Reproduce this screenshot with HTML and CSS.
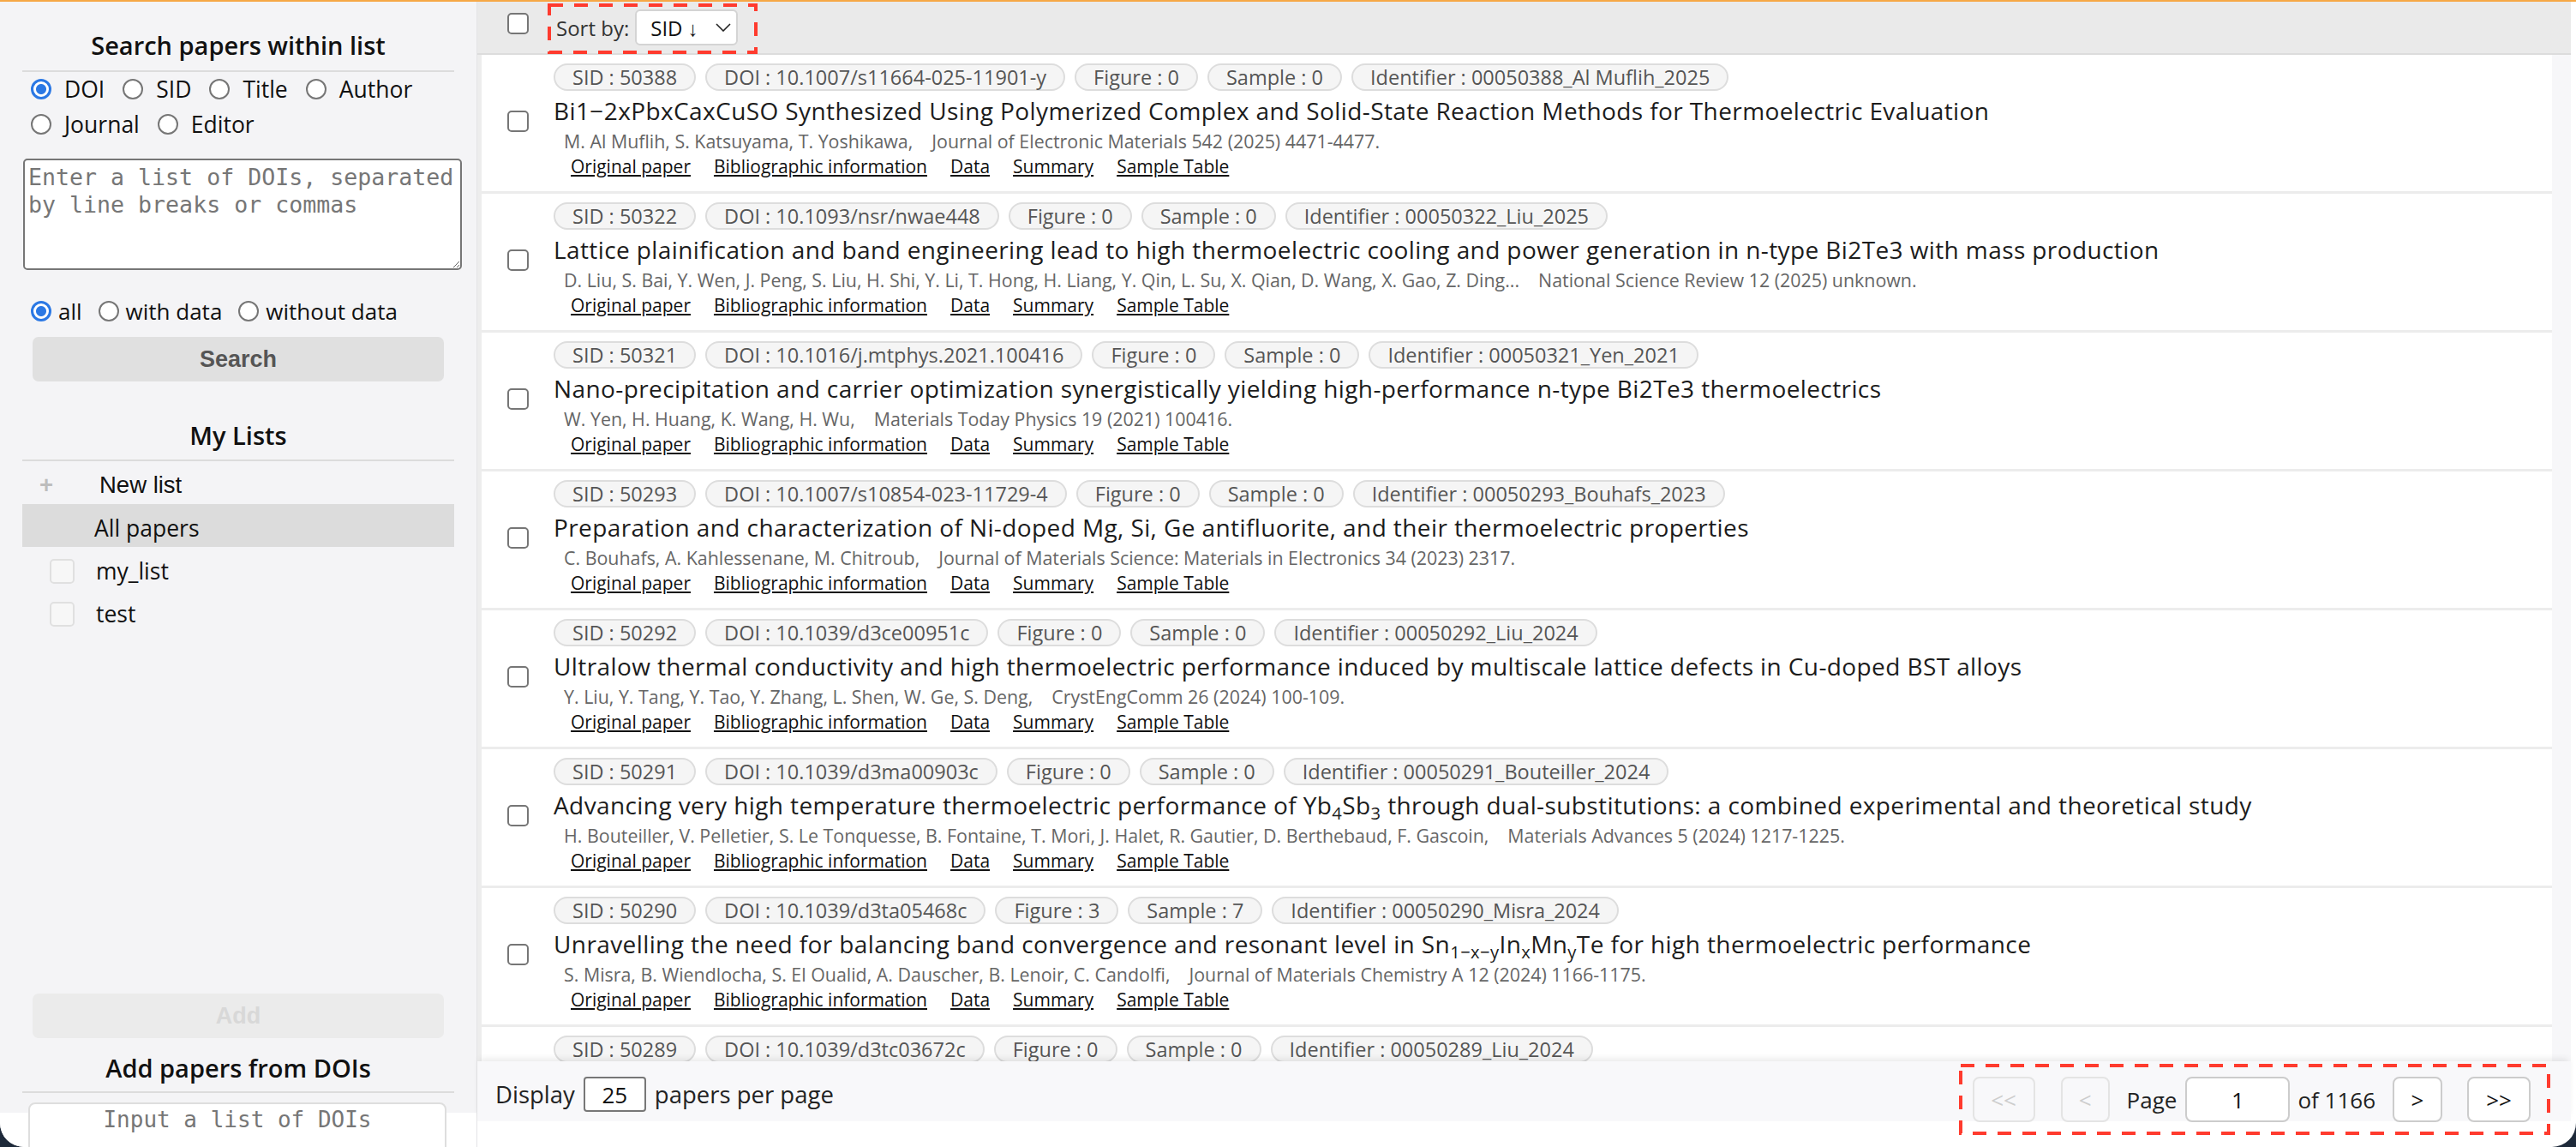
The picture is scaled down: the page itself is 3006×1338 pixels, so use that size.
FILE: index.html
```html
<!DOCTYPE html>
<html lang="en">
<head>
<meta charset="utf-8">
<title>Paper list</title>
<link rel="stylesheet" href="styles.css">
</head>
<body>
<div class="window">
  <aside class="sidebar">
    <h2 class="side-title">Search papers within list</h2>
    <div class="radios">
      <label class="radio"><input type="radio" name="field" checked>DOI</label>
      <label class="radio"><input type="radio" name="field">SID</label>
      <label class="radio"><input type="radio" name="field">Title</label>
      <label class="radio"><input type="radio" name="field">Author</label>
      <label class="radio"><input type="radio" name="field">Journal</label>
      <label class="radio"><input type="radio" name="field">Editor</label>
    </div>
    <textarea class="doi-area" placeholder="Enter a list of DOIs, separated by line breaks or commas"></textarea>
    <div class="radios filter">
      <label class="radio"><input type="radio" name="data" checked>all</label>
      <label class="radio"><input type="radio" name="data">with data</label>
      <label class="radio"><input type="radio" name="data">without data</label>
    </div>
    <button class="btn">Search</button>

    <h2 class="side-title lists-title">My Lists</h2>
    <ul class="lists">
      <li class="new"><span class="plus">+</span><span>New list</span></li>
      <li class="active">All papers</li>
      <li class="item"><span class="lbox"></span>my_list</li>
      <li class="item"><span class="lbox"></span>test</li>
    </ul>

    <div class="side-bottom">
      <button class="btn add">Add</button>
      <h2 class="side-title">Add papers from DOIs</h2>
      <textarea class="doi-input" placeholder="Input a list of DOIs"></textarea>
    </div>
  </aside>

  <main class="main">
    <div class="toolbar">
      <input type="checkbox" class="cb head-cb">
      <div class="sort">
        <span>Sort by:</span>
        <div class="select"><span>SID ↓</span><svg width="18" height="10" viewBox="0 0 18 10"><path d="M1 1 L9 9 L17 1" fill="none" stroke="#222" stroke-width="1.6"/></svg></div>
        <svg class="mark" width="245" height="59" viewBox="0 0 245 59"><rect x="2" y="2" width="241" height="55" fill="none" stroke="#ff3b2e" stroke-width="4" stroke-dasharray="16 13"/></svg>
      </div>
    </div>

    <div class="list">
      <div class="rows">
        <div class="row">
          <input type="checkbox" class="cb">
          <div class="paper">
            <div class="chips"><span class="chip">SID : 50388</span><span class="chip">DOI : 10.1007/s11664-025-11901-y</span><span class="chip">Figure : 0</span><span class="chip">Sample : 0</span><span class="chip">Identifier : 00050388_Al Muflih_2025</span></div>
            <div class="title">Bi1−2xPbxCaxCuSO Synthesized Using Polymerized Complex and Solid-State Reaction Methods for Thermoelectric Evaluation</div>
            <div class="meta">M. Al Muflih, S. Katsuyama, T. Yoshikawa,<span class="journal">Journal of Electronic Materials 542 (2025) 4471-4477.</span></div>
            <div class="links"><a href="#">Original paper</a><a href="#">Bibliographic information</a><a href="#">Data</a><a href="#">Summary</a><a href="#">Sample Table</a></div>
          </div>
        </div>
        <div class="row">
          <input type="checkbox" class="cb">
          <div class="paper">
            <div class="chips"><span class="chip">SID : 50322</span><span class="chip">DOI : 10.1093/nsr/nwae448</span><span class="chip">Figure : 0</span><span class="chip">Sample : 0</span><span class="chip">Identifier : 00050322_Liu_2025</span></div>
            <div class="title">Lattice plainification and band engineering lead to high thermoelectric cooling and power generation in n-type Bi2Te3 with mass production</div>
            <div class="meta">D. Liu, S. Bai, Y. Wen, J. Peng, S. Liu, H. Shi, Y. Li, T. Hong, H. Liang, Y. Qin, L. Su, X. Qian, D. Wang, X. Gao, Z. Ding...<span class="journal">National Science Review 12 (2025) unknown.</span></div>
            <div class="links"><a href="#">Original paper</a><a href="#">Bibliographic information</a><a href="#">Data</a><a href="#">Summary</a><a href="#">Sample Table</a></div>
          </div>
        </div>
        <div class="row">
          <input type="checkbox" class="cb">
          <div class="paper">
            <div class="chips"><span class="chip">SID : 50321</span><span class="chip">DOI : 10.1016/j.mtphys.2021.100416</span><span class="chip">Figure : 0</span><span class="chip">Sample : 0</span><span class="chip">Identifier : 00050321_Yen_2021</span></div>
            <div class="title">Nano-precipitation and carrier optimization synergistically yielding high-performance n-type Bi2Te3 thermoelectrics</div>
            <div class="meta">W. Yen, H. Huang, K. Wang, H. Wu,<span class="journal">Materials Today Physics 19 (2021) 100416.</span></div>
            <div class="links"><a href="#">Original paper</a><a href="#">Bibliographic information</a><a href="#">Data</a><a href="#">Summary</a><a href="#">Sample Table</a></div>
          </div>
        </div>
        <div class="row">
          <input type="checkbox" class="cb">
          <div class="paper">
            <div class="chips"><span class="chip">SID : 50293</span><span class="chip">DOI : 10.1007/s10854-023-11729-4</span><span class="chip">Figure : 0</span><span class="chip">Sample : 0</span><span class="chip">Identifier : 00050293_Bouhafs_2023</span></div>
            <div class="title">Preparation and characterization of Ni-doped Mg, Si, Ge antifluorite, and their thermoelectric properties</div>
            <div class="meta">C. Bouhafs, A. Kahlessenane, M. Chitroub,<span class="journal">Journal of Materials Science: Materials in Electronics 34 (2023) 2317.</span></div>
            <div class="links"><a href="#">Original paper</a><a href="#">Bibliographic information</a><a href="#">Data</a><a href="#">Summary</a><a href="#">Sample Table</a></div>
          </div>
        </div>
        <div class="row">
          <input type="checkbox" class="cb">
          <div class="paper">
            <div class="chips"><span class="chip">SID : 50292</span><span class="chip">DOI : 10.1039/d3ce00951c</span><span class="chip">Figure : 0</span><span class="chip">Sample : 0</span><span class="chip">Identifier : 00050292_Liu_2024</span></div>
            <div class="title">Ultralow thermal conductivity and high thermoelectric performance induced by multiscale lattice defects in Cu-doped BST alloys</div>
            <div class="meta">Y. Liu, Y. Tang, Y. Tao, Y. Zhang, L. Shen, W. Ge, S. Deng,<span class="journal">CrystEngComm 26 (2024) 100-109.</span></div>
            <div class="links"><a href="#">Original paper</a><a href="#">Bibliographic information</a><a href="#">Data</a><a href="#">Summary</a><a href="#">Sample Table</a></div>
          </div>
        </div>
        <div class="row">
          <input type="checkbox" class="cb">
          <div class="paper">
            <div class="chips"><span class="chip">SID : 50291</span><span class="chip">DOI : 10.1039/d3ma00903c</span><span class="chip">Figure : 0</span><span class="chip">Sample : 0</span><span class="chip">Identifier : 00050291_Bouteiller_2024</span></div>
            <div class="title">Advancing very high temperature thermoelectric performance of Yb<sub>4</sub>Sb<sub>3</sub> through dual-substitutions: a combined experimental and theoretical study</div>
            <div class="meta">H. Bouteiller, V. Pelletier, S. Le Tonquesse, B. Fontaine, T. Mori, J. Halet, R. Gautier, D. Berthebaud, F. Gascoin,<span class="journal">Materials Advances 5 (2024) 1217-1225.</span></div>
            <div class="links"><a href="#">Original paper</a><a href="#">Bibliographic information</a><a href="#">Data</a><a href="#">Summary</a><a href="#">Sample Table</a></div>
          </div>
        </div>
        <div class="row">
          <input type="checkbox" class="cb">
          <div class="paper">
            <div class="chips"><span class="chip">SID : 50290</span><span class="chip">DOI : 10.1039/d3ta05468c</span><span class="chip">Figure : 3</span><span class="chip">Sample : 7</span><span class="chip">Identifier : 00050290_Misra_2024</span></div>
            <div class="title">Unravelling the need for balancing band convergence and resonant level in Sn<sub>1−x−y</sub>In<sub>x</sub>Mn<sub>y</sub>Te for high thermoelectric performance</div>
            <div class="meta">S. Misra, B. Wiendlocha, S. El Oualid, A. Dauscher, B. Lenoir, C. Candolfi,<span class="journal">Journal of Materials Chemistry A 12 (2024) 1166-1175.</span></div>
            <div class="links"><a href="#">Original paper</a><a href="#">Bibliographic information</a><a href="#">Data</a><a href="#">Summary</a><a href="#">Sample Table</a></div>
          </div>
        </div>
        <div class="row last-row">
          <div class="paper">
            <div class="chips"><span class="chip">SID : 50289</span><span class="chip">DOI : 10.1039/d3tc03672c</span><span class="chip">Figure : 0</span><span class="chip">Sample : 0</span><span class="chip">Identifier : 00050289_Liu_2024</span></div>
          </div>
        </div>
      </div>
      <div class="gutter"></div>
    </div>

    <div class="footer">
      <div class="perpage">
        <span>Display</span>
        <span class="num">25</span>
        <span>papers per page</span>
      </div>
      <div class="pager">
        <span class="pbtn dis first">&lt;&lt;</span>
        <span class="pbtn dis prev">&lt;</span>
        <span class="plabel">Page</span>
        <span class="pinput">1</span>
        <span class="pof">of 1166</span>
        <span class="pbtn next">&gt;</span>
        <span class="pbtn last">&gt;&gt;</span>
        <svg class="mark" width="690" height="83" viewBox="0 0 690 83"><rect x="2" y="2" width="686" height="79" fill="none" stroke="#ff3b2e" stroke-width="4" stroke-dasharray="16 13"/></svg>
      </div>
    </div>
  </main>
</div>
</body>
</html>
```

FILE: styles.css
```css
* { box-sizing: border-box; }

html, body {
  margin: 0;
  height: 1338px;
  overflow: hidden;
  background: #1e2a3a;
}

body {
  font-family: "Open Sans", "Noto Sans", sans-serif;
  color: #1c1c1c;
}

.window {
  height: 1338px;
  background: #ffffff;
  border-top: 2px solid #f6a846;
  border-radius: 0 0 28px 28px;
  overflow: hidden;
  display: flex;
  padding-right: 6px;
}

/* ---------- sidebar ---------- */
.sidebar {
  width: 557px;
  flex: none;
  border-right: 1px solid #e4e4e6;
  background: linear-gradient(#f4f4f6 0, #f4f4f6 1296px, #ffffff 1296px);
  padding: 0 26px;
  display: flex;
  flex-direction: column;
}

.side-title {
  margin: 31px 0 0;
  font-size: 29px;
  font-weight: 600;
  line-height: 40px;
  text-align: center;
  padding-bottom: 9px;
  border-bottom: 2px solid #dcdcdc;
  color: #111;
}

.radios {
  display: flex;
  flex-wrap: wrap;
  margin-top: -1px;
  font-size: 26.5px;
  color: #111;
}

.radio {
  display: inline-flex;
  align-items: center;
  height: 41px;
  margin-right: 11px;
}

.radio input {
  appearance: none;
  -webkit-appearance: none;
  width: 24px;
  height: 24px;
  margin: 0 15px 0 10px;
  border: 2px solid #767676;
  border-radius: 50%;
  background: #fff;
  flex: none;
}

.radio input:checked {
  border: 3px solid #2b78e4;
  background: radial-gradient(circle, #2b78e4 0, #2b78e4 5.5px, #ffffff 6.5px);
}

.filter { margin-top: 27px; font-size: 26px; }
.filter .radio { margin-right: 9px; }
.filter .radio input { margin-right: 8px; }

.doi-area {
  display: block;
  width: 512px;
  height: 130px;
  margin: 20px 0 0 1px;
  border: 2px solid #767676;
  border-radius: 5px;
  padding: 4px;
  font: 26.6px/32px "DejaVu Sans Mono", monospace;
  background: #fff;
  resize: vertical;
}

.doi-area::placeholder { color: #767676; }

.btn {
  display: block;
  margin: 10px 12px 0;
  height: 52px;
  border: none;
  border-radius: 7px;
  background: #e0e0e0;
  color: #555;
  font: 700 27px "Liberation Sans", Arial, sans-serif;
}

.lists-title {
  margin-top: 43px;
  padding-bottom: 8px;
}

.lists {
  list-style: none;
  margin: 0;
  padding: 0;
  font-size: 26.5px;
  color: #111;
}

.lists li {
  height: 50px;
  display: flex;
  align-items: center;
  padding-top: 6px;
}

.lists .new {
  padding-left: 20px;
  font-family: "Liberation Sans", Arial, sans-serif;
  font-size: 27.5px;
}

.plus {
  width: 70px;
  color: #bdbdbd;
  font-weight: 700;
}

.lists .active {
  background: #dcdcdc;
  padding-left: 84px;
}

.lists .item { padding-left: 32px; }

.lbox {
  width: 29px;
  height: 29px;
  border: 2px solid #e0e0e0;
  border-radius: 5px;
  background: #f7f7f7;
  margin-right: 25px;
  flex: none;
}

.side-bottom {
  margin-top: auto;
  display: flex;
  flex-direction: column;
}

.btn.add {
  margin: 0 12px;
  background: #ebebeb;
  color: #d8d8d8;
}

.side-bottom .side-title {
  margin-top: 15px;
  padding-bottom: 7px;
}

.doi-input {
  display: block;
  margin: 11px 9px -10px 7px;
  height: 62px;
  border: 2px solid #dedede;
  border-radius: 8px;
  background: #fff;
  font: 26px/32px "DejaVu Sans Mono", monospace;
  text-align: center;
  padding: 2px 4px 0;
  resize: none;
}

.doi-input::placeholder { color: #767676; }

/* ---------- main ---------- */
.main {
  flex: 1;
  min-width: 0;
  height: 1306px;
  display: flex;
  flex-direction: column;
}

.toolbar {
  height: 62px;
  flex: none;
  background: #eaeaea;
  border-bottom: 2px solid #dcdcdc;
  display: flex;
  align-items: center;
  padding-left: 35px;
}

.cb {
  appearance: none;
  -webkit-appearance: none;
  width: 25px;
  height: 25px;
  margin: 0;
  border: 2px solid #767676;
  border-radius: 5px;
  background: #fff;
  flex: none;
}

.head-cb {
  align-self: flex-start;
  margin-top: 13px;
  margin-right: 32px;
}

.sort {
  position: relative;
  display: flex;
  align-items: center;
  gap: 7px;
  font-size: 24px;
  color: #333;
}

.select {
  width: 120px;
  height: 42px;
  display: flex;
  align-items: center;
  justify-content: space-between;
  background: #fff;
  border: 2px solid #d4d4d4;
  border-radius: 6px;
  padding: 0 6px 0 16px;
  color: #111;
}

.mark {
  position: absolute;
  pointer-events: none;
  overflow: visible;
}

.sort .mark { left: -10px; top: -7px; }

.list {
  flex: 1;
  min-height: 0;
  display: flex;
  overflow: hidden;
  border-left: 5px solid #ededed;
}

.rows {
  flex: 1;
  min-width: 0;
  background: #fff;
}

.gutter {
  width: 22px;
  flex: none;
  background: #f7f7f9;
}

.row {
  display: flex;
  align-items: center;
  padding: 10px 0 14px 30px;
  border-bottom: 3px solid #ececec;
}

.paper { margin-left: 29px; }

.last-row .paper { margin-left: 54px; }

.chips {
  display: flex;
  gap: 11px;
}

.chip {
  height: 32px;
  border: 2px solid #dddddd;
  border-radius: 16px;
  background: #f5f5f5;
  padding: 0 20px;
  font-size: 23.5px;
  line-height: 28px;
  color: #555;
  white-space: nowrap;
}

.title {
  margin-top: 5px;
  font-size: 28px;
  letter-spacing: 0.4px;
  line-height: 36px;
  color: #1c1c1c;
  white-space: nowrap;
}

.title sub {
  font-size: 0.72em;
  line-height: 0;
  vertical-align: -0.3em;
}

.meta {
  margin-top: 4px;
  padding-left: 12px;
  font-size: 21.4px;
  line-height: 28px;
  color: #666;
  white-space: nowrap;
}

.journal { margin-left: 22px; }

.links {
  display: flex;
  gap: 27px;
  padding-left: 20px;
  font-size: 21px;
  line-height: 30px;
}

.links a {
  color: #111;
  text-decoration: underline;
}

/* ---------- footer ---------- */
.footer {
  height: 70px;
  flex: none;
  position: relative;
  z-index: 1;
  background: #f8f8fa;
  box-shadow: 0 -5px 8px -3px rgba(0, 0, 0, 0.1);
  display: flex;
  justify-content: space-between;
  align-items: flex-start;
  padding: 18px 47px 0 21px;
  font-size: 26px;
  color: #222;
}

.perpage {
  display: flex;
  align-items: center;
  gap: 10px;
  height: 41px;
  font-size: 27.5px;
}

.num {
  width: 73px;
  height: 41px;
  border: 2px solid #777;
  border-radius: 4px;
  background: #fff;
  display: flex;
  align-items: center;
  justify-content: center;
  color: #111;
  font-size: 26px;
}

.pager {
  position: relative;
  display: flex;
  align-items: center;
  height: 53px;
}

.pager .mark { left: -16px; top: -15px; }

.pbtn {
  height: 53px;
  border: 2px solid #cccccc;
  border-radius: 8px;
  background: #fff;
  display: flex;
  align-items: center;
  justify-content: center;
  color: #111;
}

.pbtn.dis {
  border-color: #e4e4e4;
  background: transparent;
  color: #cdcdcd;
}

.first { width: 73px; margin-right: 30px; }
.prev { width: 57px; margin-right: 20px; }
.plabel { margin-right: 10px; }

.pinput {
  width: 122px;
  height: 53px;
  border: 2px solid #cccccc;
  border-radius: 8px;
  background: #fff;
  display: flex;
  align-items: center;
  justify-content: center;
  color: #111;
  margin-right: 9px;
}

.pof { margin-right: 20px; }
.next { width: 58px; margin-right: 29px; }
.last { width: 74px; }
```
